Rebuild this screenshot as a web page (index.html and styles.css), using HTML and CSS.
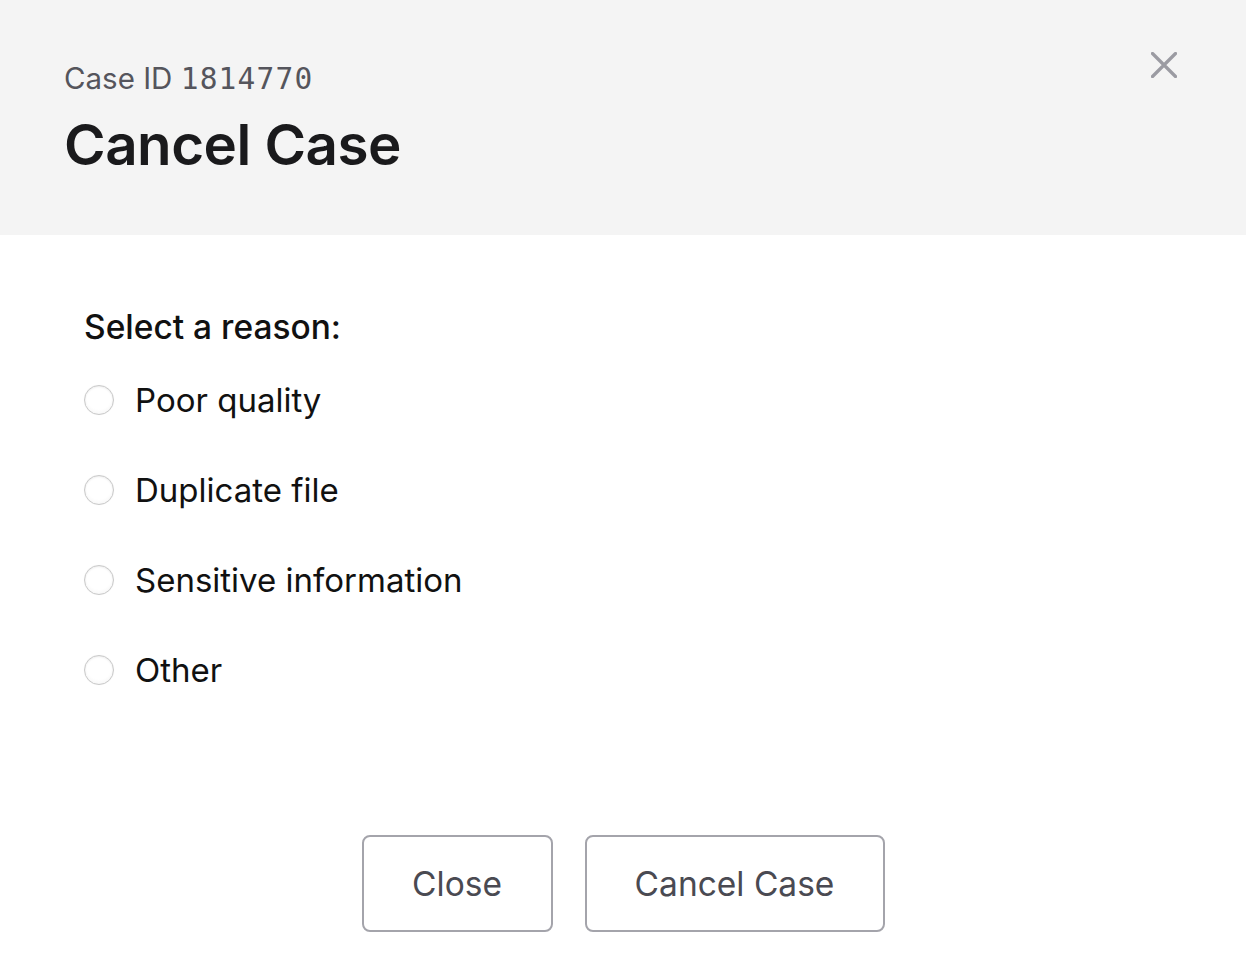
FILE: index.html
```html
<!DOCTYPE html>
<html lang="en">
<head>
<meta charset="utf-8">
<title>Cancel Case</title>
<link rel="stylesheet" href="styles.css">
</head>
<body>
<div class="modal">
  <header class="modal-header">
    <div class="case-id">Case ID <span class="mono">1814770</span></div>
    <h1 class="title">Cancel Case</h1>
    <button class="close-x" aria-label="Close">
      <svg width="26" height="26" viewBox="0 0 26 26"><path d="M1.5 1.5 L24.5 24.5 M24.5 1.5 L1.5 24.5" stroke="#9b9ba2" stroke-width="3.2" stroke-linecap="round" fill="none"/></svg>
    </button>
  </header>
  <main class="modal-body">
    <div class="label">Select a reason:</div>
    <ul class="options">
      <li class="option"><span class="radio"></span><span class="opt-text">Poor quality</span></li>
      <li class="option"><span class="radio"></span><span class="opt-text">Duplicate file</span></li>
      <li class="option"><span class="radio"></span><span class="opt-text">Sensitive information</span></li>
      <li class="option"><span class="radio"></span><span class="opt-text">Other</span></li>
    </ul>
  </main>
  <footer class="modal-footer">
    <button class="btn btn-close">Close</button>
    <button class="btn btn-cancel">Cancel Case</button>
  </footer>
</div>
</body>
</html>
```
FILE: styles.css
```css
* { box-sizing: border-box; }
html, body { margin: 0; padding: 0; background: #ffffff; }
body {
  font-family: Inter, "Noto Sans", "Liberation Sans", sans-serif;
  color: #111111;
}
.modal { width: 1246px; min-height: 978px; display: flex; flex-direction: column; }

.modal-header {
  position: relative;
  background: #f4f4f4;
  height: 235px;
  padding: 58px 0 0 64px;
}
.case-id {
  font-size: 29.5px;
  line-height: 40px;
  color: #55555c;
}
.mono {
  font-family: "DejaVu Sans Mono", "Liberation Mono", monospace;
  font-size: 29.5px;
  letter-spacing: 1.2px;
}
.title {
  margin: 10px 0 0 0;
  font-size: 56.5px;
  line-height: 72px;
  font-weight: 600;
  color: #1a1a1c;
  letter-spacing: -0.5px;
}
.close-x {
  position: absolute;
  top: 52px;
  left: 1151px;
  width: 26px;
  height: 26px;
  padding: 0;
  border: 0;
  background: transparent;
  display: flex;
}

.modal-body {
  padding: 70px 0 0 84px;
}
.label {
  font-size: 33.5px;
  line-height: 44px;
  font-weight: 500;
  color: #111111;
}
.options {
  list-style: none;
  margin: 28px 0 0 0;
  padding: 0;
  display: flex;
  flex-direction: column;
  gap: 44px;
}
.option {
  display: flex;
  align-items: center;
  gap: 21px;
  height: 46px;
}
.radio {
  width: 30px;
  height: 30px;
  border-radius: 50%;
  border: 1.5px solid #c9c9c9;
  background: radial-gradient(circle at 50% 40%, #ffffff 55%, #f0f0f0 100%);
  box-shadow: inset 0 1px 2px rgba(0,0,0,0.08), 0 0 1px rgba(0,0,0,0.08);
  flex: none;
}
.opt-text {
  font-size: 33px;
  line-height: 46px;
  color: #111111;
}

.modal-footer {
  display: flex;
  justify-content: center;
  gap: 32px;
  padding-top: 142px;
}
.btn {
  font-family: Inter, "Noto Sans", "Liberation Sans", sans-serif;
  font-size: 33.5px;
  color: #4a4a52;
  background: #ffffff;
  border: 2px solid #a4a4ab;
  border-radius: 8px;
  height: 97px;
  padding: 0;
}
.btn-close { width: 191px; }
.btn-cancel { width: 300px; }
```
